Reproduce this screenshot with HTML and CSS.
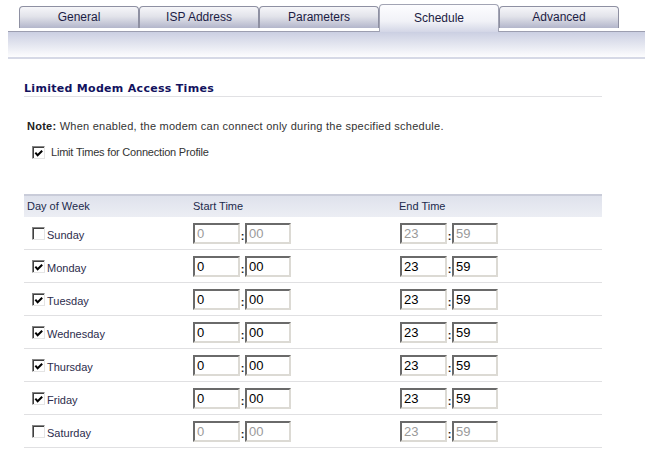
FILE: index.html
```html
<!DOCTYPE html>
<html lang="en">
<head>
  <meta charset="UTF-8">
  <title>Modem Profile | Schedule</title>
  <link rel="stylesheet" href="styles.css">
</head>
<body>

  <div class="tabs">
    <div class="tab">General</div>
    <div class="tab">ISP Address</div>
    <div class="tab">Parameters</div>
    <div class="tab sel">Schedule</div>
    <div class="tab">Advanced</div>
  </div>
  <div class="bar"></div>

  <div class="content">
    <h2>Limited Modem Access Times</h2>

    <p class="note"><b>Note:</b> When enabled, the modem can connect only during the specified schedule.</p>

    <div class="opt">
      <span class="cb on"><svg viewBox="0 0 11 11" width="11" height="11"><polyline points="1.5,4.5 4,7.5 9,2.5" /></svg></span>
      <span>Limit Times for Connection Profile</span>
    </div>

    <div class="sched">
      <div class="head">
        <div>Day of Week</div>
        <div>Start Time</div>
        <div>End Time</div>
      </div>

      <div class="row">
        <div class="day"><span class="cb"></span><span class="lbl">Sunday</span></div>
        <div class="t"><input class="hh off" value="0"><span class="colon">:</span><input class="mm off" value="00"></div>
        <div class="t end"><input class="hh off" value="23"><span class="colon">:</span><input class="mm off" value="59"></div>
      </div>
      <div class="row">
        <div class="day"><span class="cb on"><svg viewBox="0 0 11 11" width="11" height="11"><polyline points="1.5,4.5 4,7.5 9,2.5" /></svg></span><span class="lbl">Monday</span></div>
        <div class="t"><input class="hh" value="0"><span class="colon">:</span><input class="mm" value="00"></div>
        <div class="t end"><input class="hh" value="23"><span class="colon">:</span><input class="mm" value="59"></div>
      </div>
      <div class="row">
        <div class="day"><span class="cb on"><svg viewBox="0 0 11 11" width="11" height="11"><polyline points="1.5,4.5 4,7.5 9,2.5" /></svg></span><span class="lbl">Tuesday</span></div>
        <div class="t"><input class="hh" value="0"><span class="colon">:</span><input class="mm" value="00"></div>
        <div class="t end"><input class="hh" value="23"><span class="colon">:</span><input class="mm" value="59"></div>
      </div>
      <div class="row">
        <div class="day"><span class="cb on"><svg viewBox="0 0 11 11" width="11" height="11"><polyline points="1.5,4.5 4,7.5 9,2.5" /></svg></span><span class="lbl">Wednesday</span></div>
        <div class="t"><input class="hh" value="0"><span class="colon">:</span><input class="mm" value="00"></div>
        <div class="t end"><input class="hh" value="23"><span class="colon">:</span><input class="mm" value="59"></div>
      </div>
      <div class="row">
        <div class="day"><span class="cb on"><svg viewBox="0 0 11 11" width="11" height="11"><polyline points="1.5,4.5 4,7.5 9,2.5" /></svg></span><span class="lbl">Thursday</span></div>
        <div class="t"><input class="hh" value="0"><span class="colon">:</span><input class="mm" value="00"></div>
        <div class="t end"><input class="hh" value="23"><span class="colon">:</span><input class="mm" value="59"></div>
      </div>
      <div class="row">
        <div class="day"><span class="cb on"><svg viewBox="0 0 11 11" width="11" height="11"><polyline points="1.5,4.5 4,7.5 9,2.5" /></svg></span><span class="lbl">Friday</span></div>
        <div class="t"><input class="hh" value="0"><span class="colon">:</span><input class="mm" value="00"></div>
        <div class="t end"><input class="hh" value="23"><span class="colon">:</span><input class="mm" value="59"></div>
      </div>
      <div class="row">
        <div class="day"><span class="cb"></span><span class="lbl">Saturday</span></div>
        <div class="t"><input class="hh off" value="0"><span class="colon">:</span><input class="mm off" value="00"></div>
        <div class="t end"><input class="hh off" value="23"><span class="colon">:</span><input class="mm off" value="59"></div>
      </div>
    </div>
  </div>

</body>
</html>
```

FILE: styles.css
```css
*{box-sizing:border-box;margin:0;padding:0}
body{
  font-family:'Liberation Sans',Arial,sans-serif;font-size:11px;
  background:#fff;color:#2a2a48;overflow:hidden
}

/* tabs + bar */
.tabs{display:flex;align-items:flex-end;height:31px;padding-left:19px}
.tab{
  width:120px;height:22px;margin-bottom:3px;
  border:1px solid #8e90a2;border-bottom:none;border-radius:4px 4px 0 0;
  background:linear-gradient(#f6f6f9,#e2e3ea 45%,#b3b6cb);
  font-size:12px;line-height:20px;text-align:center;color:#1c1c44
}
.tab.sel{
  height:28px;margin-bottom:-1px;position:relative;
  border-color:#a2a4b4;line-height:26px;padding-bottom:4px;
  background:linear-gradient(#fdfdff,#f1f2f7 60%,#d3d6e6)
}
.bar{
  margin-left:8px;height:28px;
  border-top:1px solid #9c9eb0;border-bottom:2px solid #d6d9e6;
  background:linear-gradient(#cbcfe2,#e6e8f1 55%,#fdfdfe)
}

.content{margin-left:24px;width:578px}
h2{
  margin-top:23px;font-family:'DejaVu Sans',Verdana,sans-serif;
  font-size:11px;font-weight:700;line-height:14px;color:#12125e;
  letter-spacing:.3px;border-bottom:1px solid #e1e1e4
}
.note{margin-top:22px;padding-left:3px;line-height:14px;color:#333;letter-spacing:.25px}
.note b{color:#222}
.opt{
  display:flex;align-items:center;gap:6px;margin-top:12px;
  padding-left:8px;line-height:14px;color:#333;letter-spacing:-.2px
}

/* classic checkbox */
.cb{
  display:inline-flex;width:13px;height:13px;flex:none;
  border:1px solid;border-color:#858585 #e4e4e4 #e4e4e4 #858585;
  box-shadow:inset 1px 1px #404040;background:#fff;padding:1px 0 0 1px
}
.cb svg polyline{fill:none;stroke:#000;stroke-width:2.2}

/* schedule grid */
.sched{margin-top:35px}
.head,.row{display:grid;grid-template-columns:169px 206px 1fr}
.head{
  height:23px;align-items:center;border-top:2px solid #c9ccd9;
  background:linear-gradient(#dfe2ec,#eceef4);color:#1c2a4c
}
.head div{padding-bottom:1px}
.head div:first-child{padding-left:3px}
.row{height:33px;align-items:center;border-bottom:1px solid #e0e0e2}
.day{display:flex;align-items:center;gap:2px;padding-left:8px;color:#2c2c4c}
.day .lbl{padding-top:3px}
.t{display:flex;align-items:flex-end}
.t.end{padding-left:1px}
.t input{
  height:21px;padding:0 2px;
  font-family:'Liberation Sans',Arial,sans-serif;font-size:13px;color:#000;
  border:2px solid;border-color:#6a6a6a #dcdad4 #dcdad4 #6a6a6a;
  background:#fff;outline:none
}
.t input.hh{width:47px}
.t input.mm{width:46px}
.t input.off{color:#9a9a9a}
.colon{width:5px;text-align:center;font-size:11px;line-height:11px;padding-bottom:2px;color:#222;font-weight:700}
```
